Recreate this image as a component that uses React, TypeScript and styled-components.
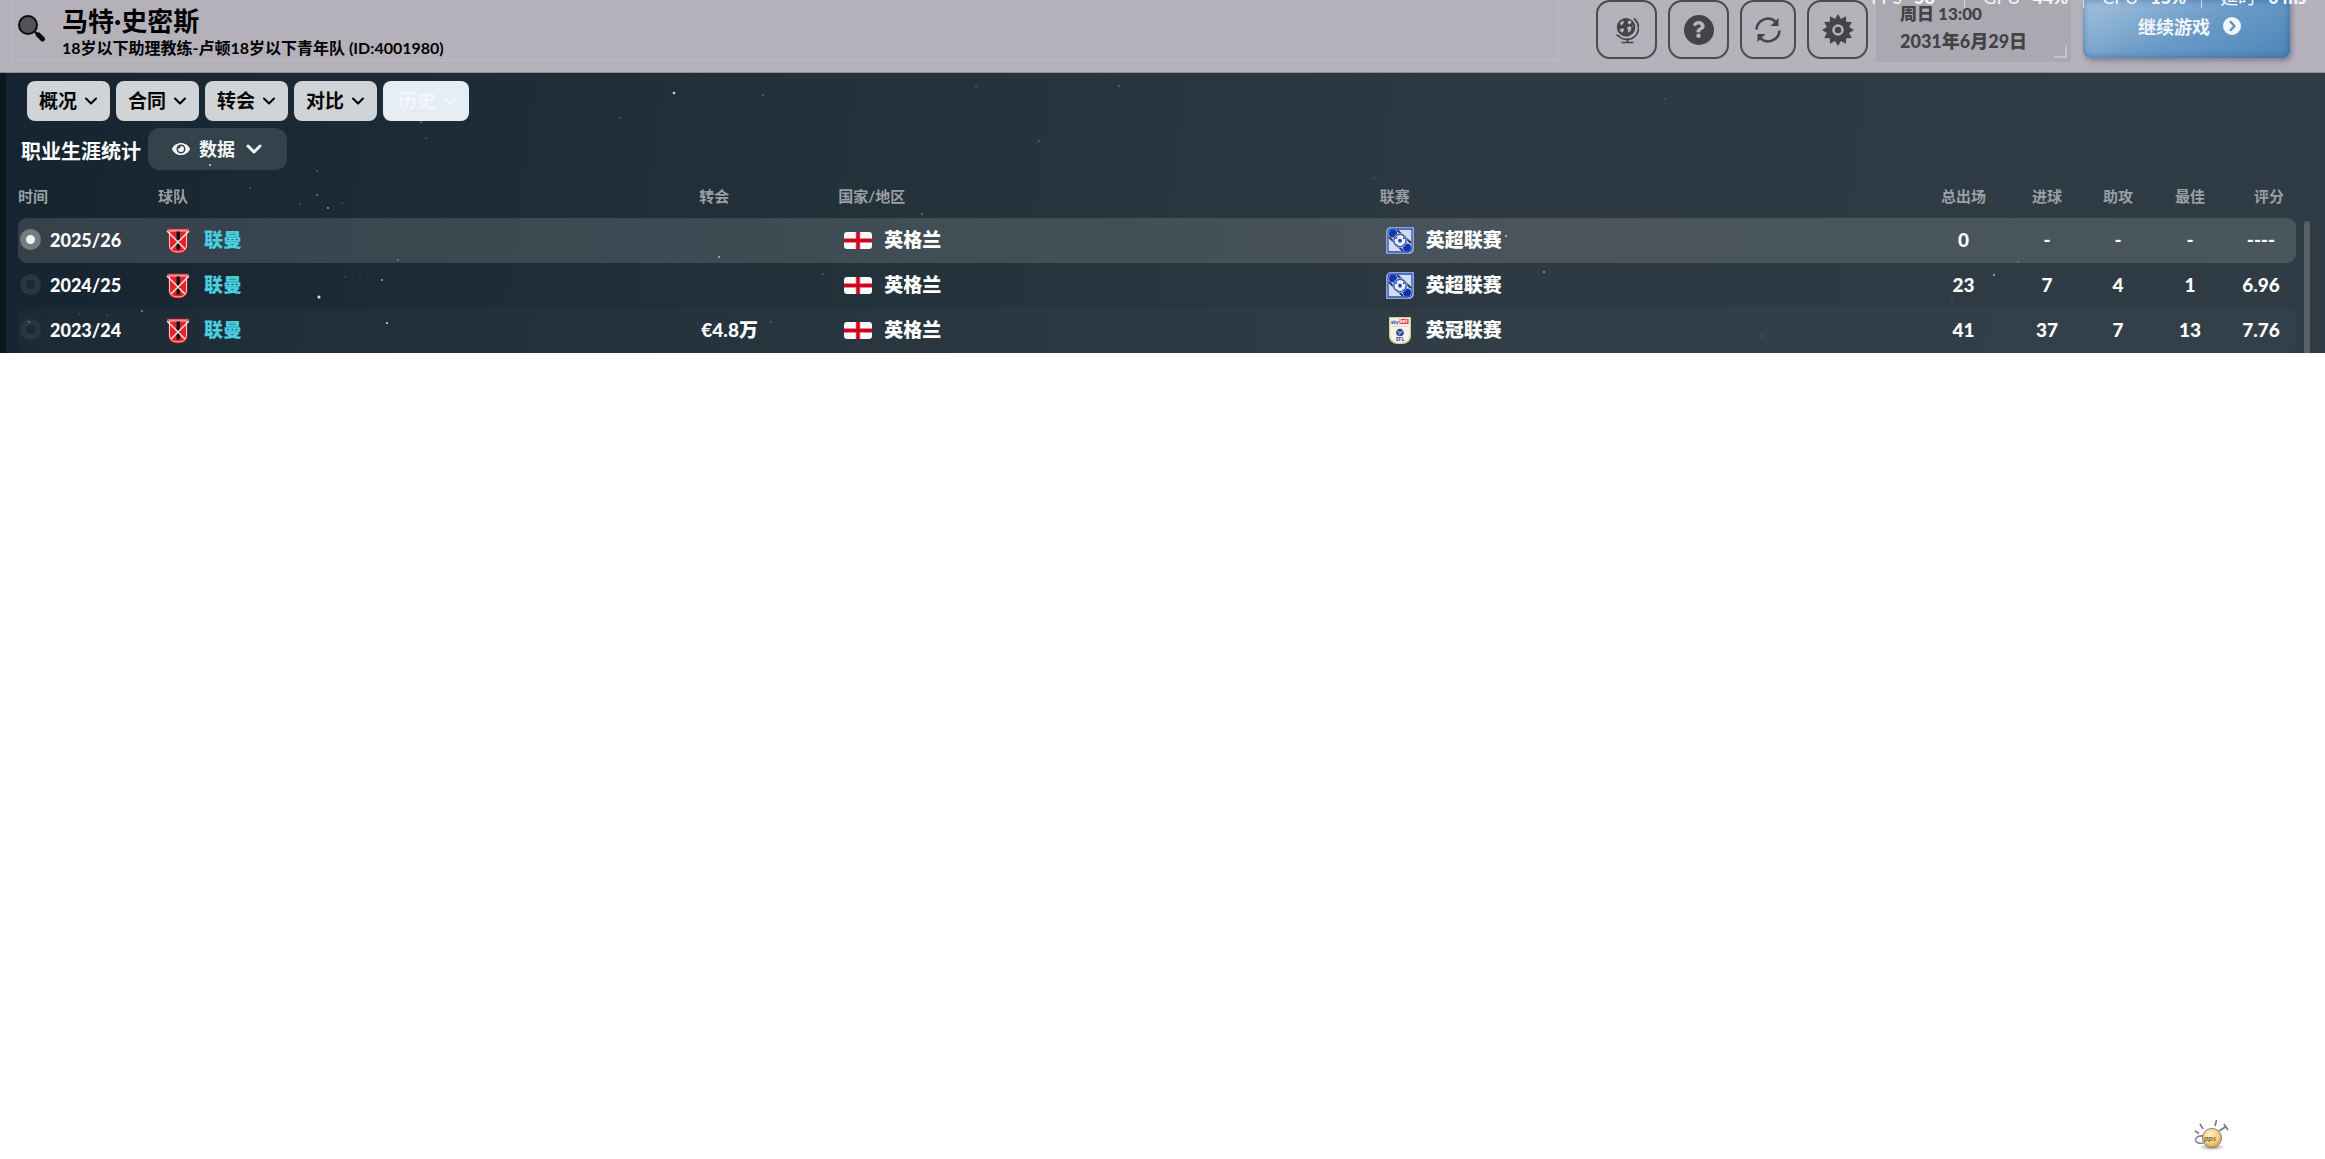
import React, { useState } from 'react';
import styled, { createGlobalStyle } from 'styled-components';
import { ChevronDown } from 'lucide-react';
import { FaEye, FaQuestion } from 'react-icons/fa';

const GlobalStyle = createGlobalStyle`
  *, *::before, *::after { box-sizing: border-box; }
  body {
    margin: 0;
    background: #fff;
    font-family: Lato, "Noto Sans CJK SC", sans-serif;
    font-weight: 700;
  }
  button, select, input { font: inherit; color: inherit; margin: 0; }
  svg { display: block; flex: none; }
`;

const Page = styled.div`
  min-height: 100vh;
  display: flex;
  flex-direction: column;
`;

const Header = styled.header`
  position: relative;
  overflow: hidden;
  display: flex;
  align-items: flex-start;
  height: 73px;
  padding: 0 35px 0 12px;
  background: linear-gradient(90deg, #b5b1bb, #b3b1b9 40%, #b5b2bd);
  border-bottom: 1px solid #8d9099;
`;

const Identity = styled.div`
  flex: 1;
  display: flex;
  height: 61px;
  margin-right: 37px;
  padding-left: 5px;
  border: 1px solid #bebbc4;
  border-top: 0;
`;

const SearchButton = styled.button`
  width: 28px;
  height: 28px;
  margin: 14px 16px 0 0;
  padding: 0;
  border: 0;
  background: none;
  cursor: pointer;
`;

const Name = styled.h1`
  margin: 5px 0 0;
  font-size: 26px;
  line-height: 32px;
  font-weight: 700;
  color: #000;
`;

const Role = styled.p`
  margin: 0;
  font-size: 16px;
  line-height: 22px;
  font-weight: 700;
  color: #000;
`;

const Tools = styled.div`
  display: flex;
  gap: 11px;
  margin-right: 8px;
`;

const ToolButton = styled.button<{ $narrow?: boolean }>`
  display: flex;
  align-items: center;
  justify-content: center;
  width: ${(p) => (p.$narrow ? 56 : 61)}px;
  height: 59px;
  padding: 0;
  border: 2px solid #4b4a4c;
  border-radius: 14px;
  background: none;
  color: #444345;
  cursor: pointer;
`;

const QuestionDisc = styled.span`
  display: flex;
  align-items: center;
  justify-content: center;
  width: 30px;
  height: 30px;
  border-radius: 50%;
  background: #444345;
  color: #b5b2bd;
`;

const Clock = styled.div`
  display: flex;
  align-items: flex-end;
  justify-content: space-between;
  width: 195px;
  height: 62px;
  margin-right: 12px;
  padding: 0 4px 4px 24px;
  background: #aaa8b1;
  color: #434245;
  font-weight: 900;
`;

const ClockText = styled.div`
  align-self: flex-start;
  padding-top: 3px;
`;

const ClockTime = styled.div`
  font-size: 17px;
  line-height: 22px;
`;

const ClockDate = styled.div`
  padding-top: 2px;
  font-size: 18px;
  line-height: 28px;
`;

const Corner = styled.span`
  width: 13px;
  height: 13px;
  border: solid #c3c1c9;
  border-width: 0 2px 2px 0;
`;

const ContinueButton = styled.button`
  display: flex;
  align-items: center;
  justify-content: center;
  gap: 13px;
  width: 207px;
  height: 58px;
  padding: 0 0 6px 6px;
  border: 0;
  border-radius: 0 0 8px 8px;
  background: linear-gradient(155deg, #a6c2dd 0%, #6c9cc8 50%, #4c85b8 100%);
  box-shadow: inset 0 0 7px rgba(20, 80, 140, 0.55), 2px 3px 5px rgba(60, 60, 80, 0.4);
  color: #f3f6fa;
  font-size: 18px;
  cursor: pointer;
`;

const Monitor = styled.div`
  position: absolute;
  top: -15px;
  right: 19px;
  display: flex;
  align-items: center;
  color: #f7f6f9;
  font-size: 18px;
  line-height: 24px;
  font-weight: 400;
  white-space: nowrap;
  pointer-events: none;
`;

const Stat = styled.span`
  min-width: 78px;
`;

const Divider = styled.span`
  width: 1px;
  height: 22px;
  margin: 0 18px 0 15px;
  background: #d9d8de;
`;

const Value = styled.b`
  margin-left: 12px;
  font-weight: 900;
`;

const Panel = styled.main`
  position: relative;
  border-left: 6px solid #0c161d;
  background: linear-gradient(97deg, #152430 0%, #1d2c36 20%, #26343d 45%, #2d3a43 65%, #2f3c45 100%);
  color: #fff;
`;

const Sky = styled.svg`
  position: absolute;
  top: 0;
  left: 0;
  width: 100%;
  height: 100%;
  pointer-events: none;
`;

const Tabs = styled.nav`
  display: flex;
  gap: 6px;
  padding: 8px 21px 7px;
`;

const Tab = styled.button<{ $active?: boolean }>`
  display: flex;
  align-items: center;
  gap: 4px;
  height: 40px;
  padding: 0 9px 0 ${(p) => (p.$active ? 15 : 12)}px;
  border: 0;
  border-radius: 8px;
  background: ${(p) => (p.$active ? '#e5edf5' : '#d0d4d7')};
  color: ${(p) => (p.$active ? '#f3f5f9' : '#050505')};
  font-size: 19px;
  line-height: 28px;
  cursor: pointer;
`;

const ViewBar = styled.div`
  display: flex;
  align-items: center;
  gap: 7px;
  height: 42px;
  padding-left: 15px;
`;

const Heading = styled.h2`
  margin: 0;
  padding-top: 4px;
  font-size: 20px;
  line-height: 28px;
  font-weight: 700;
`;

const ViewPicker = styled.label`
  display: flex;
  align-items: center;
  gap: 9px;
  height: 42px;
  padding: 0 21px 0 24px;
  border-radius: 12px;
  background: #34424b;
  color: #f4f5f5;
`;

const ViewSelect = styled.select`
  appearance: none;
  width: 72px;
  height: 42px;
  margin-right: -38px;
  padding: 0;
  border: 0;
  background: none;
  font-size: 18px;
  cursor: pointer;
`;

const PickerChevron = styled(ChevronDown)`
  pointer-events: none;
`;

const TableArea = styled.div`
  display: flex;
  padding: 0 15px 0 12px;
`;

const Table = styled.table`
  flex: 1;
  width: 0;
  table-layout: fixed;
  border-collapse: separate;
  border-spacing: 0;
`;

const Col = styled.col<{ $width?: number }>`
  width: ${(p) => (p.$width ? `${p.$width}px` : 'auto')};
`;

const Th = styled.th<{ $center?: boolean; $last?: boolean }>`
  height: 48px;
  padding: 4px 0 0 ${(p) => (p.$last ? 10 : 0)}px;
  font-size: 15px;
  line-height: 20px;
  font-weight: 700;
  color: #9a9fa3;
  text-align: ${(p) => (p.$center ? 'center' : 'left')};
`;

const Row = styled.tr<{ $tone: 'selected' | 'plain' | 'striped' }>`
  & > td {
    background: ${(p) =>
      p.$tone === 'selected'
        ? 'rgba(255, 255, 255, 0.135)'
        : p.$tone === 'striped'
        ? 'rgba(255, 255, 255, 0.025)'
        : 'transparent'};
  }
  & > td:first-child { border-radius: 9px 0 0 9px; }
  & > td:last-child { border-radius: 0 9px 9px 0; }
`;

const Td = styled.td<{ $center?: boolean; $last?: boolean }>`
  height: 45px;
  padding: 0 ${(p) => (p.$last ? 6 : 0)}px 2px 0;
  font-size: 19px;
  line-height: 28px;
  font-weight: 900;
  text-align: ${(p) => (p.$center ? 'center' : 'left')};
`;

const Season = styled.label`
  display: flex;
  align-items: center;
  gap: 9px;
  padding-left: 2px;
  font-size: 18px;
  cursor: pointer;
`;

const SeasonRadio = styled.input`
  appearance: none;
  width: 21px;
  height: 21px;
  border: 6px solid #2a373f;
  border-radius: 50%;
  background: #1a2933;
  &:checked {
    border-color: #747b81;
    background: #f2f3f4;
  }
`;

const Entry = styled.div`
  display: flex;
  align-items: center;
  gap: 12px;
  padding-left: 6px;
`;

const Emblem = styled.span`
  display: flex;
  justify-content: center;
  width: 28px;
  padding-top: 2px;
`;

const TeamLink = styled.a`
  color: #48cfe0;
  text-decoration: none;
`;

const Fee = styled.div`
  padding-left: 2px;
`;

const Scrollbar = styled.div`
  width: 6px;
  margin: 51px 0 0 8px;
  border-radius: 3px 3px 0 0;
  background: #56616a;
`;

const Footer = styled.footer`
  display: flex;
  justify-content: flex-end;
  margin-top: auto;
  padding: 0 94px 7px 0;
`;

const SearchIcon = () => (
  <svg width="28" height="28" viewBox="0 0 28 28" aria-hidden="true">
    <circle cx="10" cy="11" r="9" fill="#545357" stroke="#0b0b0b" strokeWidth="2" />
    <path d="M17 18l2 2" stroke="#0b0b0b" strokeWidth="2.500" />
    <path d="M20.500 21l4 4" stroke="#0b0b0b" strokeWidth="5" strokeLinecap="round" />
  </svg>
);

const GlobeIcon = () => (
  <svg width="24" height="28" viewBox="0 0 26 30" aria-hidden="true">
    <circle cx="12" cy="12" r="10" fill="#444345" />
    <path d="M5 8l3-3 2 1-1 2-2 2zM14 5l3 0 1 2-2 2-2-1zM5 14l4-1 1 2-2 3-2-1zM13 12l3-1 2 1-1 4-3 2 0-3zM19 9l1 2-1 1z" fill="#b5b2bd" />
    <path d="M20.500 2.500l1.500 1.500a12.500 12.500 0 0 1-18 17.500l-2.500-1" fill="none" stroke="#444345" strokeWidth="1.800" />
    <path d="M13.500 24v4M7 28.500h13" fill="none" stroke="#444345" strokeWidth="1.800" />
  </svg>
);

const RefreshIcon = () => (
  <svg width="28" height="28" viewBox="0 0 28 28" fill="none" stroke="#444345" strokeWidth="2.500" aria-hidden="true">
    <path d="M2.500 13.500A11.500 11.500 0 0 1 21.500 5.500" />
    <path d="M25.500 14.500A11.500 11.500 0 0 1 6.500 22.500" />
    <path d="M24.500 2v8h-8z" fill="#444345" stroke="none" />
    <path d="M3.500 26v-8h8z" fill="#444345" stroke="none" />
  </svg>
);

const gearPoints = Array.from({ length: 24 }, (_, i) => {
  const r = i % 2 === 0 ? 16 : 11.5;
  const a = (i * Math.PI) / 12;
  return `${(16 + r * Math.sin(a)).toFixed(2)},${(16 - r * Math.cos(a)).toFixed(2)}`;
}).join(' ');

const GearIcon = () => (
  <svg width="32" height="32" viewBox="0 0 32 32" aria-hidden="true">
    <polygon points={gearPoints} fill="#444345" />
    <circle cx="16" cy="16" r="4.500" fill="#444345" stroke="#b5b2bd" strokeWidth="2.500" />
  </svg>
);

const NextIcon = () => (
  <svg width="18" height="18" viewBox="0 0 18 18" aria-hidden="true">
    <circle cx="9" cy="9" r="9" fill="#f3f6fa" />
    <path d="M7.500 4.800l4 4.200-4 4.200" fill="none" stroke="#5a8dbd" strokeWidth="2.200" strokeLinecap="round" strokeLinejoin="round" />
  </svg>
);

const ClubCrest = () => (
  <svg width="24" height="26" viewBox="0 0 24 26" aria-hidden="true">
    <path d="M1 .500h22l-1.500 4v14.500q-1 6.500-9.500 6.500t-9.500-6.500v-14.500z" fill="#b01720" />
    <path d="M3.500 3h17v15q-.5 6-8.500 6t-8.500-6z" fill="#ea2127" stroke="#f3c9c9" />
    <path d="M10.500 3.500h3.500v18h-3.500z" fill="#141114" />
    <path d="M1 3l18 18M23 3l-18 18" stroke="#f8e4e4" strokeWidth="1.500" />
    <path d="M1.500 2h21" stroke="#f1bcbc" />
  </svg>
);

const EnglandFlag = () => (
  <svg width="28" height="17" viewBox="0 0 28 17" aria-hidden="true">
    <rect width="28" height="17" rx="3" fill="#fbfbfb" />
    <path d="M14 0v17M0 8.500h28" stroke="#efb3bb" strokeWidth="5" />
    <path d="M14 0v17M0 8.500h28" stroke="#d0021b" strokeWidth="3.400" />
  </svg>
);

const PremierCrest = () => (
  <svg width="28" height="27" viewBox="0 0 28 27" aria-hidden="true">
    <path d="M5 .500h22.500v21q0 5-5 5h-22v-21q0-5 4.500-5z" fill="#d5dcf0" stroke="#8ea2dc" />
    <path d="M5 2h21v19q0 4-4 4h-20v-19q0-4 3-4z" fill="none" stroke="#2549b4" strokeWidth="1.300" />
    <path d="M3 10l14 14M11 3l14 13" stroke="#33384d" strokeWidth="2" />
    <circle cx="7" cy="6.500" r="4" fill="#0d36ac" />
    <circle cx="21" cy="20.500" r="4" fill="#0d36ac" />
    <circle cx="14" cy="13.500" r="7" fill="#1841b4" stroke="#9eb0df" />
    <circle cx="14" cy="13.500" r="5.500" fill="#edf1fc" />
    <path d="M14 11.500l2 1.500-.8 2.500h-2.400l-.8-2.500zM9 12l1.500-2.500 1 2zM17 9.500l2 2.500-2 0zM11 17l1.500 1.500-2-.5zM17 17l-1 1.500 2-1.500z" fill="#1841b4" />
  </svg>
);

const CrestText = styled.text`
  font-family: Lato, sans-serif;
  font-weight: 900;
`;

const ChampionshipCrest = () => (
  <svg width="22" height="27" viewBox="0 0 22 27" aria-hidden="true">
    <path d="M.500.500h21v17q0 9-10.500 9t-10.500-9z" fill="#f6f3e8" stroke="#d8cc96" strokeWidth="1.500" />
    <rect x="10.500" y="2" width="9" height="5" fill="#e9353d" />
    <CrestText x="2" y="6.500" fontSize="5" fill="#2940a0">sky</CrestText>
    <CrestText x="11" y="6" fontSize="5" fill="#fff">bet</CrestText>
    <path d="M3 9.500h16" stroke="#e1d8ac" />
    <circle cx="11" cy="15.500" r="3.800" fill="#2a449f" />
    <path d="M8.500 14l2.500 2 3-2.500M9.500 18l2-1.500" stroke="#f0d9a0" fill="none" />
    <CrestText x="7" y="24" fontSize="5" fill="#2940a0">EFL</CrestText>
  </svg>
);

const PpsIcon = () => (
  <svg width="38" height="34" viewBox="0 0 38 34" aria-label="pps" role="img">
    <defs>
      <radialGradient id="ball" cx="0.4" cy="0.3" r="0.75">
        <stop offset="0" stopColor="#fff0c0" />
        <stop offset="0.6" stopColor="#f8cf78" />
        <stop offset="1" stopColor="#dc9c4a" />
      </radialGradient>
      <radialGradient id="shade">
        <stop offset="0" stopColor="#8a8a8a" />
        <stop offset="1" stopColor="#fff" />
      </radialGradient>
    </defs>
    <ellipse cx="19" cy="29" rx="13" ry="3.500" fill="url(#shade)" />
    <path d="M11 18q-8-1-8.500 4 .5 4 8 3" fill="none" stroke="#858789" strokeWidth="1.600" />
    <path d="M26 13l7-4.500M31 6l4 6" stroke="#7b7d80" strokeWidth="1.800" />
    <circle cx="19" cy="20" r="9.500" fill="url(#ball)" stroke="#85796a" />
    <path d="M2 13l4 2.500M7 6l3 5M23.500 2l-1.500 6" stroke="#77797c" strokeWidth="1.600" />
    <CrestText x="11" y="23" fontSize="8" fontStyle="italic" fill="#74705f">pps</CrestText>
  </svg>
);

// x, y, radius, opacity
const stars: [number, number, number, number][] = [
  [674, 20, 1.3, 0.9], [763, 22, 0.8, 0.5], [620, 45, 0.8, 0.4], [317, 98, 0.9, 0.3],
  [328, 135, 0.9, 0.7], [382, 207, 0.9, 0.8], [319, 224, 1.5, 1], [387, 250, 1, 0.9],
  [142, 238, 0.9, 0.6], [107, 242, 0.7, 0.4], [29, 249, 0.8, 0.6], [79, 241, 0.7, 0.3],
  [250, 115, 0.8, 0.4], [317, 122, 0.9, 0.5], [300, 131, 0.7, 0.5], [342, 130, 0.7, 0.3],
  [360, 204, 0.7, 0.3], [345, 204, 0.7, 0.3], [421, 49, 0.9, 0.4], [37, 16, 0.8, 0.5],
  [210, 92, 1, 0.9], [426, 65, 0.7, 0.4], [976, 13, 0.8, 0.4],
  [1119, 13, 0.8, 0.5], [1039, 68, 0.8, 0.4], [922, 141, 0.9, 0.4], [719, 184, 0.9, 0.8],
  [823, 201, 0.8, 0.4], [771, 249, 0.8, 0.4], [1506, 163, 1, 0.8], [1544, 199, 1, 0.6],
  [1374, 105, 0.8, 0.3], [1994, 202, 1.2, 0.5], [2018, 189, 0.8, 0.4], [1952, 228, 0.8, 0.3],
  [1762, 263, 0.8, 0.3], [1665, 26, 0.7, 0.3], [398, 187, 0.8, 0.5], [88, 152, 0.6, 0.4],
];

type SeasonRow = {
  season: string;
  fee: string;
  league: string;
  premier: boolean;
  stats: string[];
};

const seasons: SeasonRow[] = [
  { season: '2025/26', fee: '', league: '英超联赛', premier: true, stats: ['0', '-', '-', '-', '----'] },
  { season: '2024/25', fee: '', league: '英超联赛', premier: true, stats: ['23', '7', '4', '1', '6.96'] },
  { season: '2023/24', fee: '€4.8万', league: '英冠联赛', premier: false, stats: ['41', '37', '7', '13', '7.76'] },
];

const textHeads = ['时间', '球队', '转会', '国家/地区', '联赛'];
const statHeads = ['总出场', '进球', '助攻', '最佳', '评分'];
const tabs = ['概况', '合同', '转会', '对比', '历史'];
const monitor = [['FPS', '58'], ['GPU', '44%'], ['CPU', '15%'], ['延时', '0 ms']];

export default function App() {
  const [selected, setSelected] = useState('2025/26');

  return (
    <Page>
      <GlobalStyle />
      <Header>
        <Identity>
          <SearchButton aria-label="搜索"><SearchIcon /></SearchButton>
          <div>
            <Name>马特·史密斯</Name>
            <Role>18岁以下助理教练-卢顿18岁以下青年队 (ID:4001980)</Role>
          </div>
        </Identity>
        <Tools>
          <ToolButton aria-label="世界"><GlobeIcon /></ToolButton>
          <ToolButton aria-label="帮助"><QuestionDisc><FaQuestion size={17} /></QuestionDisc></ToolButton>
          <ToolButton aria-label="刷新" $narrow><RefreshIcon /></ToolButton>
          <ToolButton aria-label="设置"><GearIcon /></ToolButton>
        </Tools>
        <Clock>
          <ClockText>
            <ClockTime>周日 13:00</ClockTime>
            <ClockDate>2031年6月29日</ClockDate>
          </ClockText>
          <Corner />
        </Clock>
        <ContinueButton>继续游戏<NextIcon /></ContinueButton>
        <Monitor>
          {monitor.map(([label, value], i) => (
            <React.Fragment key={label}>
              {i > 0 && <Divider />}
              <Stat>
                {label}
                <Value>{value}</Value>
              </Stat>
            </React.Fragment>
          ))}
        </Monitor>
      </Header>

      <Panel>
        <Sky viewBox="0 0 2319 280" preserveAspectRatio="xMinYMin slice" aria-hidden="true">
          {stars.map(([x, y, r, o]) => (
            <circle key={`${x}-${y}`} cx={x - 6} cy={y} r={r} fill="#dfeaf0" opacity={o} />
          ))}
        </Sky>
        <Tabs>
          {tabs.map((tab) => (
            <Tab key={tab} $active={tab === '历史'} aria-haspopup="menu">
              {tab}
              <ChevronDown size={20} strokeWidth={2.5} />
            </Tab>
          ))}
        </Tabs>
        <ViewBar>
          <Heading>职业生涯统计</Heading>
          <ViewPicker>
            <FaEye size={18} />
            <ViewSelect aria-label="视图" defaultValue="数据">
              <option>数据</option>
            </ViewSelect>
            <PickerChevron size={24} strokeWidth={3} />
          </ViewPicker>
        </ViewBar>
        <TableArea>
          <Table>
            <colgroup>
              <Col $width={140} />
              <Col />
              <Col $width={139} />
              <Col />
              <Col />
              <Col $width={85} />
              <Col $width={82} />
              <Col $width={60} />
              <Col $width={84} />
              <Col $width={64} />
            </colgroup>
            <thead>
              <tr>
                {textHeads.map((head) => <Th key={head}>{head}</Th>)}
                {statHeads.map((head) => (
                  <Th key={head} $center $last={head === '评分'}>{head}</Th>
                ))}
              </tr>
            </thead>
            <tbody>
              {seasons.map((row, index) => (
                <Row
                  key={row.season}
                  $tone={row.season === selected ? 'selected' : index % 2 === 0 ? 'striped' : 'plain'}
                >
                  <Td>
                    <Season>
                      <SeasonRadio
                        type="radio"
                        name="season"
                        checked={row.season === selected}
                        onChange={() => setSelected(row.season)}
                      />
                      {row.season}
                    </Season>
                  </Td>
                  <Td>
                    <Entry>
                      <Emblem><ClubCrest /></Emblem>
                      <TeamLink href="#team">联曼</TeamLink>
                    </Entry>
                  </Td>
                  <Td><Fee>{row.fee}</Fee></Td>
                  <Td>
                    <Entry>
                      <Emblem><EnglandFlag /></Emblem>
                      英格兰
                    </Entry>
                  </Td>
                  <Td>
                    <Entry>
                      <Emblem>{row.premier ? <PremierCrest /> : <ChampionshipCrest />}</Emblem>
                      {row.league}
                    </Entry>
                  </Td>
                  {row.stats.map((stat, i) => (
                    <Td key={statHeads[i]} $center $last={i === 4}>{stat}</Td>
                  ))}
                </Row>
              ))}
            </tbody>
          </Table>
          <Scrollbar />
        </TableArea>
      </Panel>

      <Footer>
        <PpsIcon />
      </Footer>
    </Page>
  );
}
